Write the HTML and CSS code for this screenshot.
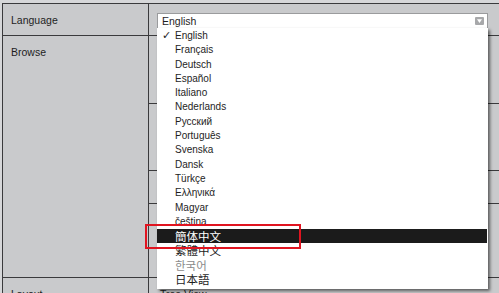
FILE: index.html
```html
<!DOCTYPE html>
<html>
<head>
<meta charset="utf-8">
<link rel="stylesheet" href="styles.css">
</head>
<body>
<div class="page">
  <table class="prefs">
    <colgroup><col class="c-label"><col class="c-value"></colgroup>
    <tr class="r-lang">
      <td class="label">Language</td>
      <td class="value">
        <div class="select"><span class="sel-text">English</span><span class="arrow"><svg width="9" height="8" viewBox="0 0 9 8"><rect x="0" y="0" width="9" height="8" rx="1" fill="#a7a8aa"/><path d="M2 2.2 L7 2.2 L4.5 6 Z" fill="#fff"/></svg></span></div>
      </td>
    </tr>
    <tr class="r-b1"><td class="label" rowspan="4">Browse</td><td></td></tr>
    <tr class="r-b2"><td></td></tr>
    <tr class="r-b3"><td></td></tr>
    <tr class="r-b4"><td></td></tr>
    <tr class="r-layout"><td class="label">Layout</td><td class="value-text">Tree View</td></tr>
  </table>

  <ul class="menu">
    <li class="checked"><span class="check">✓</span>English</li>
    <li>Français</li>
    <li>Deutsch</li>
    <li>Español</li>
    <li>Italiano</li>
    <li>Nederlands</li>
    <li>Русский</li>
    <li>Português</li>
    <li>Svenska</li>
    <li>Dansk</li>
    <li>Türkçe</li>
    <li>Ελληνικά</li>
    <li>Magyar</li>
    <li>čeština</li>
    <li class="cjk selected">簡体中文</li>
    <li class="cjk">繁體中文</li>
    <li class="cjk dim">한국어</li>
    <li class="cjk">日本語</li>
  </ul>
  <div class="callout"></div>
</div>
</body>
</html>
```

FILE: styles.css
```css
html, body {
  margin: 0;
  padding: 0;
}
body {
  width: 499px;
  height: 293px;
  overflow: hidden;
  background: #d6d7d9;
  font-family: "Liberation Sans", Arial, sans-serif;
  color: #1e1e1e;
}
.page {
  position: relative;
  width: 499px;
  height: 293px;
  padding: 3px 0 0 2px;
  box-sizing: border-box;
  overflow: hidden;
}
.prefs {
  border-collapse: collapse;
  table-layout: fixed;
  width: 540px;
  background: #c9cacc;
}
.c-label { width: 146px; }
.prefs td {
  border: 1px solid #3a3a3c;
  padding: 0;
  vertical-align: top;
  font-size: 10.5px;
}
.prefs td.label {
  padding: 10px 8px 0 8px;
}
.r-lang td.label {
  padding-top: 0;
  vertical-align: middle;
}
.r-lang { height: 32px; }
.r-b1 { height: 68px; }
.r-b2 { height: 67px; }
.r-b3 { height: 33px; }
.r-b4 { height: 74px; }
.r-layout { height: 30px; }
.prefs td.value {
  vertical-align: top;
  padding: 9px 0 0 8px;
}
.prefs td.value-text {
  padding: 10px 8px 0 11px;
}
.select {
  box-sizing: border-box;
  width: 331px;
  height: 16px;
  background: #fff;
  border: 1px solid #9a9b9d;
  display: flex;
  align-items: center;
  justify-content: space-between;
  padding: 0 3px 0 4px;
  font-size: 10.5px;
  color: #1e1e1e;
}
.arrow {
  display: flex;
  align-items: center;
}
.menu {
  position: absolute;
  left: 157px;
  top: 28px;
  width: 331px;
  margin: 0;
  padding: 1px 0 3px 0;
  list-style: none;
  background: #fff;
  box-shadow: 2px 2px 3px rgba(0, 0, 0, 0.55);
  box-sizing: border-box;
}
.menu li {
  position: relative;
  height: 14.3px;
  line-height: 14.3px;
  padding-left: 18px;
  font-size: 10px;
  color: #1e1e1e;
  white-space: nowrap;
  overflow: hidden;
}
.menu li.cjk {
  font-family: "Noto Sans CJK SC", "Noto Sans CJK KR", sans-serif;
  font-size: 11.5px;
}
.menu li.cjk.dim {
  font-family: "Noto Sans CJK KR", sans-serif;
  color: #8a8a8a;
}
.menu li.selected {
  background: #1b1b1b;
  color: #fff;
  margin-right: 1px;
}
.check {
  position: absolute;
  left: 5px;
  top: 0;
  font-size: 11px;
  font-family: "DejaVu Sans", sans-serif;
}
.callout {
  position: absolute;
  left: 145px;
  top: 224px;
  width: 156px;
  height: 25px;
  box-sizing: border-box;
  border: 2px solid #e01420;
}
```
